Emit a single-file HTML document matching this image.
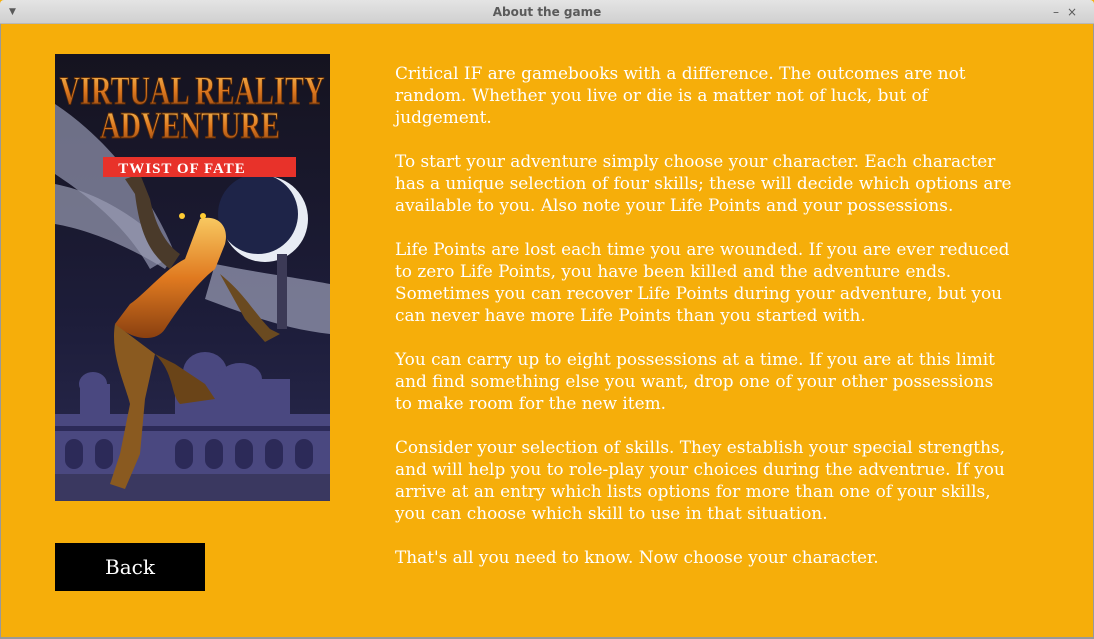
<!DOCTYPE html>
<html><head><meta charset="utf-8"><style>
html,body{margin:0;padding:0;width:1094px;height:639px;overflow:hidden;background:#f6ae0a;}
.tb{position:absolute;left:0;top:0;width:1094px;height:24px;background:linear-gradient(#e4e4e4,#d0d0d0);border-bottom:1px solid #b8b8b8;font-family:"DejaVu Sans","Liberation Sans",sans-serif;font-size:12px;font-weight:bold;color:#5a5a5a;text-align:center;line-height:25px;box-sizing:border-box;border-radius:4px 4px 0 0;}
.tb .l{position:absolute;left:9px;top:0;font-size:9px;}
.tb .r{position:absolute;right:9px;top:0;font-weight:normal;font-size:12px;letter-spacing:8px;}
.txt{position:absolute;left:395px;top:62px;font-family:"DejaVu Serif","Liberation Serif",serif;font-size:16.9px;line-height:22px;color:#fff;white-space:nowrap;}
.btn{position:absolute;left:55px;top:543px;width:150px;height:48px;background:#000;color:#fff;font-family:"DejaVu Serif","Liberation Serif",serif;font-size:20px;line-height:48px;text-align:center;}
.bot{position:absolute;left:0;top:637px;width:1094px;height:2px;background:#999;}
.side{position:absolute;top:24px;width:1px;height:615px;background:#999;}
</style></head><body>
<div class="tb"><span class="l">▼</span>About the game<span class="r">–×</span></div>
<div class="side" style="left:0"></div><div class="side" style="right:0"></div>
<svg style="position:absolute;left:55px;top:54px" width="275" height="447" viewBox="0 0 275 447">
<defs>
<linearGradient id="sky" x1="0" y1="0" x2="0" y2="1"><stop offset="0" stop-color="#15131f"/><stop offset="0.6" stop-color="#1d1d3a"/><stop offset="1" stop-color="#2a2a50"/></linearGradient>
<linearGradient id="gold" x1="0" y1="0" x2="0" y2="1"><stop offset="0" stop-color="#f8c860"/><stop offset="0.5" stop-color="#e07a20"/><stop offset="1" stop-color="#8a4010"/></linearGradient>
</defs>
<rect width="275" height="447" fill="url(#sky)"/>
<path d="M0 50 C60 90 100 150 120 200 L95 215 C70 170 30 140 0 120Z" fill="#8c8fa8" opacity="0.75"/>
<path d="M0 130 C50 140 90 170 120 200 L110 215 C70 190 30 175 0 170Z" fill="#9a9cb4" opacity="0.7"/>
<path d="M160 210 C210 220 250 225 275 230 L275 280 C230 275 190 260 150 245Z" fill="#9698b2" opacity="0.75"/>
<circle cx="210" cy="165" r="43" fill="#e8ecf4"/>
<circle cx="203" cy="160" r="40" fill="#1e2448"/>
<rect x="222" y="200" width="10" height="75" fill="#3c3a56"/>
<g fill="#4a4880">
<rect x="0" y="360" width="275" height="87"/>
<rect x="120" y="325" width="115" height="40"/>
<ellipse cx="150" cy="318" rx="22" ry="20"/>
<ellipse cx="185" cy="325" rx="22" ry="16"/>
<ellipse cx="38" cy="330" rx="14" ry="12"/>
<rect x="25" y="330" width="30" height="30"/>
</g>
<g fill="#2c2a58"><rect x="0" y="372" width="275" height="5"/>
<rect x="10" y="385" width="18" height="30" rx="9"/><rect x="40" y="385" width="18" height="30" rx="9"/><rect x="120" y="385" width="18" height="30" rx="9"/><rect x="150" y="385" width="18" height="30" rx="9"/><rect x="180" y="385" width="18" height="30" rx="9"/><rect x="210" y="385" width="18" height="30" rx="9"/><rect x="240" y="385" width="18" height="30" rx="9"/></g>
<rect x="0" y="420" width="275" height="27" fill="#3a3860"/>
<path d="M145 165 C160 160 175 170 170 190 L160 215 C140 230 120 260 110 275 C100 290 75 285 60 270 L75 250 C90 240 110 215 130 205Z" fill="url(#gold)"/>
<path d="M60 270 C55 300 70 330 75 350 L65 400 L55 430 L70 435 L85 400 L90 345 L100 300Z" fill="#8a5a20"/>
<path d="M100 300 C120 320 115 340 125 350 L160 345 L150 330 L120 310Z" fill="#6a4418"/>
<path d="M165 220 C190 240 200 260 215 275 L225 280 L210 288 L190 265Z" fill="#6a4a20"/>
<path d="M115 215 C95 200 85 180 80 140 L70 125 L85 120 L95 145 C100 170 110 190 125 200Z" fill="#4a3a2a"/>
<circle cx="127" cy="162" r="3" fill="#ffcc33"/><circle cx="148" cy="162" r="3" fill="#ffcc33"/>
<text x="137" y="50" text-anchor="middle" font-family="Liberation Serif,serif" font-weight="bold" font-size="40" fill="url(#gold)" stroke="#5a2a08" stroke-width="1" textLength="265" lengthAdjust="spacingAndGlyphs">VIRTUAL REALITY</text>
<text x="135" y="84" text-anchor="middle" font-family="Liberation Serif,serif" font-weight="bold" font-size="38" fill="url(#gold)" stroke="#5a2a08" stroke-width="1" textLength="180" lengthAdjust="spacingAndGlyphs">ADVENTURE</text>
<rect x="48" y="103" width="193" height="20" fill="#e8322a"/>
<text x="127" y="119" text-anchor="middle" font-family="Liberation Serif,serif" font-weight="bold" font-size="15" fill="#fff" letter-spacing="1">TWIST OF FATE</text>
</svg>
<div class="btn">Back</div>
<div class="txt">Critical IF are gamebooks with a difference. The outcomes are not<br>random. Whether you live or die is a matter not of luck, but of<br>judgement.<br><br>To start your adventure simply choose your character. Each character<br>has a unique selection of four skills; these will decide which options are<br>available to you. Also note your Life Points and your possessions.<br><br>Life Points are lost each time you are wounded. If you are ever reduced<br>to zero Life Points, you have been killed and the adventure ends.<br>Sometimes you can recover Life Points during your adventure, but you<br>can never have more Life Points than you started with.<br><br>You can carry up to eight possessions at a time. If you are at this limit<br>and find something else you want, drop one of your other possessions<br>to make room for the new item.<br><br>Consider your selection of skills. They establish your special strengths,<br>and will help you to role-play your choices during the adventrue. If you<br>arrive at an entry which lists options for more than one of your skills,<br>you can choose which skill to use in that situation.<br><br>That's all you need to know. Now choose your character.</div>
<div class="bot"></div>
</body></html>
